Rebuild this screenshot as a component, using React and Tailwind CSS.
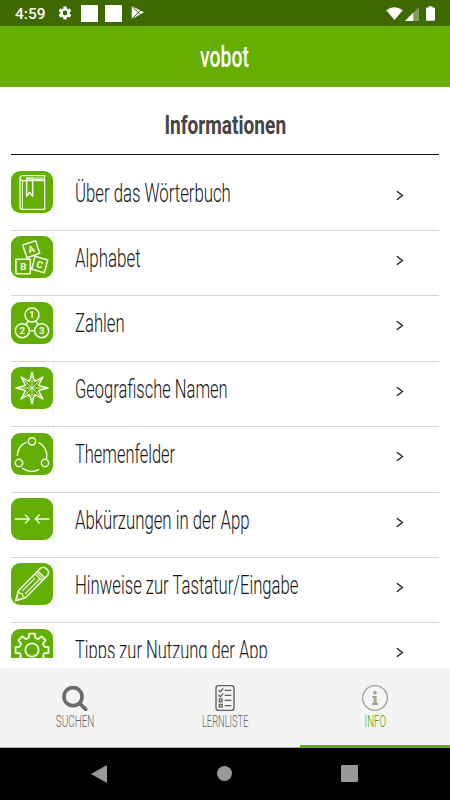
import { Fragment } from "react";

const FONT = "font-['Roboto','Liberation_Sans',sans-serif]";

// eight-toothed gear outline around 63,63
function gearPath(outer, root) {
  const pts = [];
  for (let i = 0; i < 8; i++) {
    const mid = i * 45 - 90;
    [[-15, root], [-10, outer], [10, outer], [15, root]].forEach(([a, r]) => {
      const rad = ((mid + a) * Math.PI) / 180;
      pts.push(`${(63 + r * Math.cos(rad)).toFixed(1)} ${(63 + r * Math.sin(rad)).toFixed(1)}`);
    });
  }
  return `M${pts.join("L")}Z`;
}

function starPath(cardinal, diagonal, inner) {
  const pts = [];
  for (let i = 0; i < 16; i++) {
    const rad = ((i * 22.5 - 90) * Math.PI) / 180;
    const r = i % 2 ? inner : i % 4 ? diagonal : cardinal;
    pts.push(`${(63 + r * Math.cos(rad)).toFixed(1)} ${(63 + r * Math.sin(rad)).toFixed(1)}`);
  }
  return `M${pts.join("L")}Z`;
}

const Label = ({ x, y, size = 29, children }) => (
  <text x={x} y={y} fontSize={size} fontWeight="700" textAnchor="middle" fill="#f4faec" stroke="none">
    {children}
  </text>
);

const icons = {
  book: (
    <g strokeWidth="4">
      <path d="M101 14H36c-6 0-9 3-9 8v87c0 4 3 6 8 6h66V29H36c-5 0-9-2-9-7" />
      <path d="M34 29v83M46 21h55M66 25h35M101 14v15" strokeWidth="3" />
      <path d="M47 23v53l9-12 9 12V23z" strokeWidth="4.5" />
    </g>
  ),
  alphabet: (
    <g strokeWidth="4.5">
      <path d="M35 27l39-13 12 38-38 13zM15 70h43v43H15zM72 61l38 11-10 38-38-10z" />
      <g transform="rotate(-18 61 40)"><Label x={61} y={50}>A</Label></g>
      <Label x={37} y={102}>B</Label>
      <g transform="rotate(16 86 86)"><Label x={86} y={96}>C</Label></g>
    </g>
  ),
  numbers: (
    <g strokeWidth="4.5">
      <circle cx="63" cy="39" r="21" />
      <circle cx="34" cy="86" r="21" />
      <circle cx="92" cy="86" r="21" />
      <path d="M55 86h16M52 57l-7 11M74 57l7 11" />
      <Label x={62} y={49}>1</Label>
      <Label x={34} y={96}>2</Label>
      <Label x={92} y={96}>3</Label>
    </g>
  ),
  compass: (
    <g strokeWidth="4">
      <path d={starPath(48, 47, 21)} />
      <path d="M63 24v78M24 63h78M36 36l54 54M90 36L36 90" strokeWidth="2.5" />
    </g>
  ),
  topics: (
    <g strokeWidth="4.5">
      <circle cx="63" cy="25" r="11" />
      <circle cx="24" cy="90" r="11" />
      <circle cx="102" cy="90" r="11" />
      <path d="M19 67a45 45 0 0 1 26-39M84 29a45 45 0 0 1 23 46M35 106a46 46 0 0 0 48 4" />
    </g>
  ),
  arrows: <path strokeWidth="4.2" d="M13 63h42M43 51l12 12-12 12M114 63H73M85 51L73 63l12 12" />,
  pencil: (
    <g strokeWidth="4.5" transform="translate(14 113) rotate(-45.5)">
      <path d="M0 0l27-15h92c9 0 14 6 14 15s-5 15-14 15H27z" />
      <path d="M27-15l-3 8 5 7-5 7 3 8M9-5v10M36-6h52M36 6h61M98-15v30M104-15v30M110-15v30" strokeWidth="3.5" />
    </g>
  ),
  gear: (
    <g strokeWidth="5.5">
      <path d={gearPath(50, 38)} />
      <circle cx="63" cy="63" r="20" />
    </g>
  ),
};

const items = [
  { icon: "book", label: "Über das Wörterbuch", squeeze: "scale-x-[0.657]" },
  { icon: "alphabet", label: "Alphabet", squeeze: "scale-x-[0.663]" },
  { icon: "numbers", label: "Zahlen", squeeze: "scale-x-[0.654]" },
  { icon: "compass", label: "Geografische Namen", squeeze: "scale-x-[0.648]" },
  { icon: "topics", label: "Themenfelder", squeeze: "scale-x-[0.645]" },
  { icon: "arrows", label: "Abkürzungen in der App", squeeze: "scale-x-[0.657]" },
  { icon: "pencil", label: "Hinweise zur Tastatur/Eingabe", squeeze: "scale-x-[0.654]" },
  { icon: "gear", label: "Tipps zur Nutzung der App", squeeze: "scale-x-[0.648]" },
];

function StatusBar() {
  return (
    <div className="flex h-[26px] shrink-0 items-center bg-[#3d6900] text-white">
      <span className="mt-[3px] ml-[15px] w-[31px] text-[15.5px] leading-none font-medium whitespace-nowrap">4:59</span>
      <svg viewBox="0 0 24 24" className="ml-[11px] size-4" fill="#fff">
        <path d="M19.14 12.94c.04-.3.06-.61.06-.94 0-.32-.02-.64-.07-.94l2.03-1.58a.49.49 0 0 0 .12-.61l-1.92-3.32a.49.49 0 0 0-.59-.22l-2.39.96c-.5-.38-1.03-.7-1.62-.94l-.36-2.54a.48.48 0 0 0-.48-.41h-3.84c-.24 0-.43.17-.47.41l-.36 2.54c-.59.24-1.13.57-1.62.94l-2.39-.96a.48.48 0 0 0-.59.22L2.74 8.87c-.12.21-.08.47.12.61l2.03 1.58c-.05.3-.09.63-.09.94s.02.64.07.94l-2.03 1.58a.49.49 0 0 0-.12.61l1.92 3.32c.12.22.37.29.59.22l2.39-.96c.5.38 1.03.7 1.62.94l.36 2.54c.05.24.24.41.48.41h3.84c.24 0 .44-.17.47-.41l.36-2.54c.59-.24 1.13-.56 1.62-.94l2.39.96c.22.08.47 0 .59-.22l1.92-3.32a.49.49 0 0 0-.12-.61zM12 15.6A3.6 3.6 0 1 1 12 8.400a3.6 3.6 0 0 1 0 7.200z" />
      </svg>
      <span className="ml-2 h-[17px] w-[17px] bg-white" />
      <span className="ml-[7px] h-[17px] w-[17px] bg-white" />
      <svg viewBox="0 0 39 42" className="ml-[9px] h-[14px] w-[13px]">
        <path fill="#fff" d="M2 0l37 19-37 21z" />
        <path fill="none" stroke="#3d6900" strokeWidth="3" d="M3 1l26 26M3 39L29 12" />
      </svg>
      <svg viewBox="0 0 51 40" className="ml-auto h-[13px] w-[17px]" fill="#fff">
        <path d="M0 10Q25-9 51 10L25.500 40z" />
      </svg>
      <svg viewBox="0 0 41 41" className="mt-[2px] ml-[2px] h-[14px] w-[14px]">
        <path fill="#fff" opacity=".35" d="M0 41L41 0v41z" />
        <path fill="#fff" d="M0 41l24-24v24z" />
      </svg>
      <svg viewBox="0 0 27 44" className="mr-[15px] ml-[7px] h-[15px] w-[9px]" fill="#fff">
        <path d="M8 0h11v4h5q3 0 3 3v34q0 3-3 3H3q-3 0-3-3V7q0-3 3-3h5z" />
      </svg>
    </div>
  );
}

function Row({ icon, label, squeeze }) {
  return (
    <li className="flex h-[65.4px] items-start border-b border-[#d6d6d6]">
      <div className="flex h-[53px] w-[43px] items-center border-r border-[#f1f1f1]">
        <svg viewBox="0 0 126 126" className="h-[42px] w-[42px] shrink-0" fill="none" stroke="#f4faec" strokeLinejoin="round" strokeLinecap="round">
          <rect width="126" height="126" rx="27" fill="#62ae02" stroke="none" />
          {icons[icon]}
        </svg>
      </div>
      <span className={`mt-[10px] ml-[21px] w-[300px] origin-left text-[25.5px] leading-[34px] font-light whitespace-nowrap text-[#161616] ${squeeze}`}>
        {label}
      </span>
      <svg viewBox="0 0 8 11" className="mt-[24px] ml-[21px] h-[11px] w-2 shrink-0" fill="none" stroke="#111" strokeWidth="1.2">
        <path d="M.8 1.200L6.500 5.500.8 9.800" />
      </svg>
    </li>
  );
}

function SearchIcon() {
  return (
    <svg viewBox="0 0 78 78" className="size-[26px]" fill="none" stroke="#6b6b6b" strokeLinecap="round">
      <circle cx="33" cy="35" r="27" strokeWidth="11" />
      <path d="M54 56l17 17" strokeWidth="11" />
    </svg>
  );
}

function ListIcon() {
  return (
    <svg viewBox="0 0 78 78" className="size-[26px]" fill="none" stroke="#5f5f5f" strokeWidth="4">
      <rect x="12" y="2" width="54" height="74" rx="8" />
      {[15, 30].map((y) => (
        <Fragment key={y}>
          <path d={`M20 ${y}l5 5 9-10M38 ${y + 1}h20`} />
        </Fragment>
      ))}
      {[46, 62].map((y) => (
        <Fragment key={y}>
          <rect x="22" y={y - 4} width="8" height="8" />
          <path d={`M38 ${y}h20`} />
        </Fragment>
      ))}
    </svg>
  );
}

function InfoIcon() {
  return (
    <svg viewBox="0 0 78 78" className="size-[26px]" fill="#9da894">
      <circle cx="39" cy="39" r="37" fill="none" stroke="#9da894" strokeWidth="4" />
      <circle cx="39" cy="23" r="5.500" />
      <path d="M31 33h13v21h4v6H30v-6h5V39h-4z" />
    </svg>
  );
}

const tabs = [
  { Icon: SearchIcon, label: "SUCHEN", squeeze: "scale-x-[0.6]" },
  { Icon: ListIcon, label: "LERNLISTE", squeeze: "scale-x-[0.565]" },
  { Icon: InfoIcon, label: "INFO", squeeze: "scale-x-[0.585]", active: true },
];

export default function App() {
  return (
    <div className={`flex h-[800px] w-[450px] flex-col overflow-hidden bg-white ${FONT}`}>
      <StatusBar />
      <header className="flex h-[61px] shrink-0 items-center justify-center bg-[#66ae00] pt-[2px]">
        <h1 className="scale-x-[0.67] text-[29px] leading-none font-medium text-white">vobot</h1>
      </header>

      <main className="h-[571px] shrink-0 overflow-hidden px-[11px]">
        <div className="flex h-[68px] items-center justify-center border-b border-[#111] pt-[11px]">
          <h2 className="scale-x-[0.749] text-[25.5px] leading-none font-bold whitespace-nowrap text-[#444]">Informationen</h2>
        </div>
        <ul className="pt-[10.600px]">
          {items.map((item) => (
            <Row key={item.icon} {...item} />
          ))}
        </ul>
      </main>

      <nav className="mt-[10px] flex h-20 shrink-0 bg-[#f4f4f4]">
        {tabs.map(({ Icon, label, squeeze, active }) => (
          <div
            key={label}
            className={`flex flex-1 flex-col items-center pt-[17px] ${active ? "border-b-3 border-[#62ae02] text-[#4fa502]" : "border-b border-[#aaa] text-[#666]"}`}
          >
            <Icon />
            <span className={`mt-[2px] text-[16.500px] leading-[17px] font-light whitespace-nowrap ${squeeze}`}>{label}</span>
          </div>
        ))}
      </nav>

      <div className="flex flex-1 items-center bg-black pb-px">
        <svg viewBox="0 0 16 18" className="ml-[91px] h-[18px] w-4" fill="#999">
          <path d="M16 0v18L0 9z" />
        </svg>
        <span className="ml-[110px] size-[15px] rounded-full bg-[#999]" />
        <span className="ml-[109px] size-[17px] rounded-[1px] bg-[#999]" />
      </div>
    </div>
  );
}
